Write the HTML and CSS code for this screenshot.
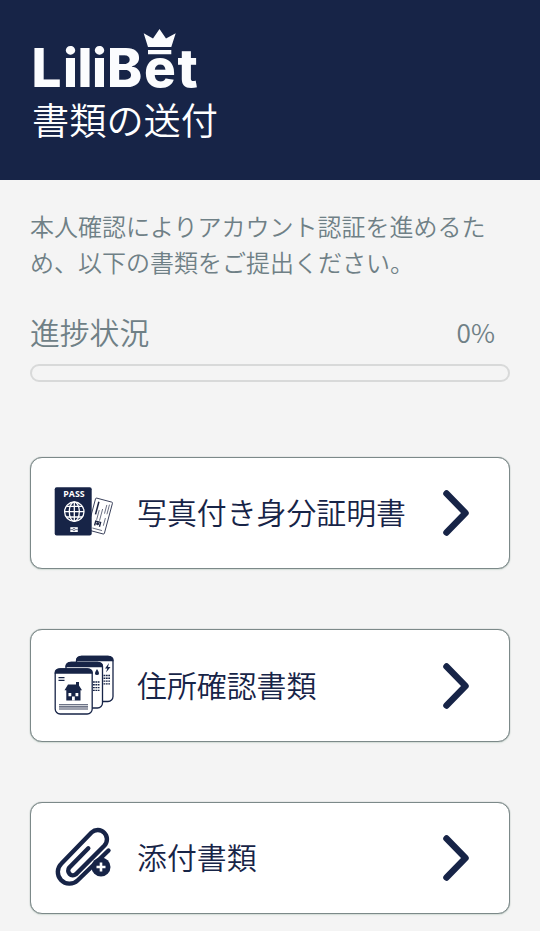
FILE: index.html
```html
<!DOCTYPE html>
<html lang="ja">
<head>
<meta charset="utf-8">
<meta name="viewport" content="width=device-width, initial-scale=1">
<title>書類の送付</title>
<link rel="stylesheet" href="styles.css">
</head>
<body>
<header class="header">
  <svg class="logo" width="180" height="62" viewBox="0 0 180 62" role="img" aria-label="LiliBet">
    <text class="logo-text" y="58.5" x="-.5 31 45.5 60 75 112 145.5">LiliBet</text>
    <path d="M111.7 5.300L121 10.500 127.500 1 134 10.500 143.700 5.300 139.300 19H116zM116 22h23.300v4.200H116z" fill="#fbfcfe"/>
  </svg>
  <h1 class="title">書類の送付</h1>
</header>
<main class="main">
  <p class="intro">本人確認によりアカウント認証を進めるため、以下の書類をご提出ください。</p>
  <div class="progress-head"><h2 class="progress-title">進捗状況</h2><span class="percent">0%</span></div>
  <div class="progress"></div>
  <nav class="cards">
    <a class="card">
      <svg class="icon" width="60" height="60" viewBox="0 0 60 60">
        <g transform="translate(44.2 15.500) rotate(15)" stroke="#1d2542" fill="#fff">
          <rect x="-2.500" y="0" width="17.500" height="33" rx="1" stroke-width=".8"/>
          <path d="M4 11v10M7 9v12M10 4v9M12.500 3v10M12 17v8M2 30h10" fill="none" stroke-width=".6"/>
          <path d="M1.500 3v13" stroke-width="1.500"/>
          <path d="M3.500 27v-4.500h5V27" fill="none" stroke-width="1.400"/><circle cx="6" cy="24.500" r="1" fill="#1d2542"/>
        </g>
        <rect x=".7" y="4.200" width="37" height="48.200" rx="2" fill="#172447"/>
        <text class="pass" x="9.300" y="13.500">PASS</text>
        <g fill="none" stroke="#fff" stroke-width="1.300"><circle cx="20.300" cy="28.700" r="9.700"/><ellipse cx="20.300" cy="28.700" rx="5" ry="9.700"/><path d="M20.300 19v19.400M10.600 28.700H30M12.300 23.400h16M12.300 34h16"/></g>
        <rect x="16.300" y="44.200" width="7.500" height="4.800" fill="#fff"/><path d="M16.300 46.600h2.200M21.600 46.600h2.200" stroke="#172447" stroke-width=".6"/><circle cx="20" cy="46.600" r="1.200" fill="none" stroke="#172447" stroke-width=".6"/>
      </svg>
      <span class="label">写真付き身分証明書</span>
      <svg class="chevron" width="28" height="48" viewBox="0 0 28 48"><path d="M4.500 4.500L23.500 24 4.500 43.500"/></svg>
    </a>
    <a class="card">
      <svg class="icon" width="60" height="60" viewBox="0 0 60 60">
        <g transform="translate(.5 -1.500)">
        <g fill="#fff" stroke="#172447" stroke-width="1.300">
          <rect x="22" y="2" width="36.500" height="45" rx="5"/>
          <path d="M22 6q0-4 5-4h26.500q5 0 5 4z" fill="#172447"/>
          <rect x="11.500" y="8" width="36.500" height="45.500" rx="5"/>
          <path d="M11.500 12q0-4 5-4H43q5 0 5 4z" fill="#172447"/>
          <rect x=".7" y="14.500" width="37" height="45" rx="5"/>
          <path d="M.7 18.500q0-4 5-4h27q5 0 5 4z" fill="#172447"/>
        </g>
        <path d="M54.500 8.500l-4 5.500h2.300l-1.300 4 4.500-5.500h-2.500zM42.500 14.500q-4 6 0 6 4 0 0-6zM10 35.800L13.500 30H21.500V27.500h3V31l3 4.800h-1.500V46H11.800V35.800zM4 22.500h6v1.300H4zM4 25.300h6v1.300H4z" fill="#172447"/>
        <path d="M4.500 50.300h29M4.500 52.400h29M4.500 54.500h29" stroke="#3e4760" stroke-width="1.100"/>
        <path d="M14 38.500h2.800v3.200H14zM21 38.500h2.800v3.200H21zM17.500 42h2.800V46h-2.800z" fill="#fff"/>
        <path d="M38.500 27.500h6.500M38.500 30.300h6.500M38.500 33.100h6.500M38.500 35.900h6.500M49 21h6.500M49 23.800h6.500M49 26.600h6.500M49 29.400h6.500" stroke="#172447" stroke-width="1.400" stroke-dasharray="1.800 .600"/>
        </g>
      </svg>
      <span class="label">住所確認書類</span>
      <svg class="chevron" width="28" height="48" viewBox="0 0 28 48"><path d="M4.500 4.500L23.500 24 4.500 43.500"/></svg>
    </a>
    <a class="card">
      <svg class="icon" width="60" height="60" viewBox="0 0 60 60">
        <path class="clip" d="M34.300 20.300L15.200 39.700A4.700 4.700 0 0 0 21.800 46.300L50.500 17.500A9.200 9.200 0 0 0 37.500 4.500L7.500 35.500A11.300 11.300 0 0 0 23.500 52.500L54.500 22.500"/>
        <circle cx="47" cy="39" r="9.500" fill="#172447"/>
        <path d="M47 34.500v9M42.500 39h9" stroke="#fff" stroke-width="2.600"/>
      </svg>
      <span class="label">添付書類</span>
      <svg class="chevron" width="28" height="48" viewBox="0 0 28 48"><path d="M4.500 4.500L23.500 24 4.500 43.500"/></svg>
    </a>
  </nav>
</main>
</body>
</html>
```
FILE: styles.css
```css
* { box-sizing: border-box; }
body { margin: 0; height: 931px; overflow: hidden; background: #f4f4f4; color: #172447; font-family: "Noto Sans CJK JP", sans-serif; font-weight: 350; }
.header { height: 180px; padding: 28px 32px; background: #172447; color: #fff; }
.logo { display: block; overflow: visible; }
.logo-text { font-family: Inter, sans-serif; font-size: 53px; font-weight: 800; fill: #fbfcfe; }
.title { margin: 2px 0 0; font-size: 37.2px; line-height: 54px; font-weight: 350; }
.main { padding: 28px 30px 0; color: #6f8086; }
.intro { margin: 0; font-size: 24px; line-height: 36px; }
.progress-head { display: flex; justify-content: space-between; align-items: center; height: 45px; margin-top: 29px; padding-right: 15px; }
.progress-title { margin: 0; font-size: 29.8px; line-height: 45px; font-weight: 350; }
.percent { font-size: 26.3px; line-height: 40px; }
.progress { height: 18px; margin-top: 10px; border: 2px solid #d8d9d9; border-radius: 9px; }
.cards { display: flex; flex-direction: column; gap: 60px; margin-top: 75px; }
.card { display: flex; align-items: center; height: 112.4px; padding: 0 39px 0 23px; background: #fff; border: 1.500px solid #7c8989; border-radius: 12px; color: #172447; box-shadow: 0 0 1px #7c8989, 0 1px 2px #dce5df; }
.icon { flex: none; overflow: visible; }
.label { flex: 1; margin-left: 23px; padding-bottom: 3px; font-size: 29.9px; line-height: 45px; white-space: nowrap; }
.chevron { fill: none; stroke: #172447; stroke-width: 6.500; stroke-linecap: round; stroke-linejoin: round; }
.pass { font: 700 8.800px "Open Sans", sans-serif; fill: #fff; }
.clip { fill: none; stroke: #172447; stroke-width: 4.400; stroke-linecap: round; }
```
